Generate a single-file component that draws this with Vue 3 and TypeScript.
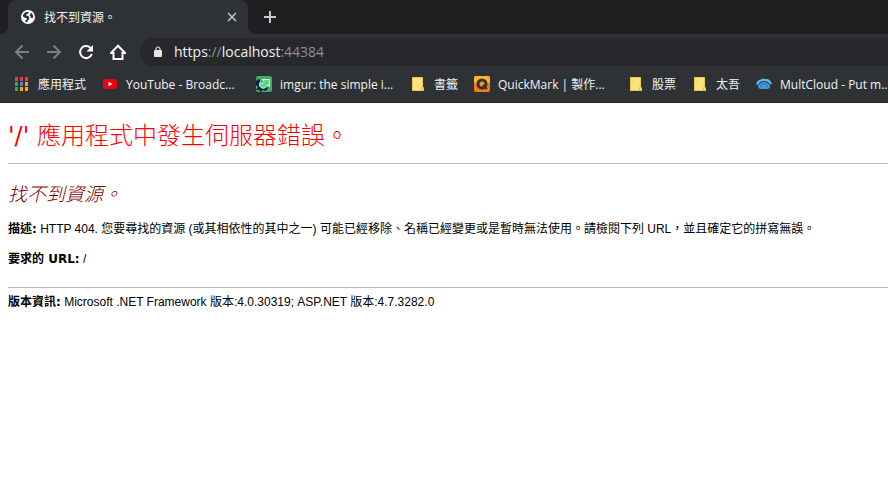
<script setup lang="ts">
type IconName = 'apps' | 'youtube' | 'imgur' | 'folder' | 'quickmark' | 'cloud'

interface Bookmark {
  icon: IconName
  label: string
  wide?: boolean
}

const bookmarks: Bookmark[] = [
  { icon: 'apps', label: '應用程式' },
  { icon: 'youtube', label: 'YouTube - Broadc...', wide: true },
  { icon: 'imgur', label: 'imgur: the simple i...', wide: true },
  { icon: 'folder', label: '書籤' },
  { icon: 'quickmark', label: 'QuickMark | 製作...', wide: true },
  { icon: 'folder', label: '股票' },
  { icon: 'folder', label: '太吾' },
  { icon: 'cloud', label: 'MultCloud - Put m...', wide: true },
]

const appColors: string[] = [
  '#e8403a', '#e8403a', '#e8403a',
  '#34a853', '#4285f4', '#f0a818',
  '#34a853', '#f5b005', '#f5b005',
]
</script>

<template>
  <div class="browser">
    <header class="chrome">
      <div class="tabstrip">
        <div class="tab">
          <svg class="favicon" viewBox="0 0 16 16" aria-hidden="true">
            <circle cx="8" cy="8" r="7" fill="#fff" />
            <path d="M2.800 7.200C3 5 4.500 3.400 6.500 2.900H8.800L8.300 4.500 6.500 5.200 6.200 6.500 8.300 7 9.300 8.400 9 10.500 7.800 11.500 7.200 13.300 5 12.700 5.500 11.200 7 10.200 6.800 9.200 4.500 8.500Z" fill="#2f3235" />
            <path d="M10.500 3.500C12.300 4.400 13.200 6 13.200 8.300L12.300 9.300 10.800 8.800 10.500 7.300 9.300 6.300 10.400 5.300Z" fill="#2f3235" />
          </svg>
          <span class="tab-title">找不到資源。</span>
          <button class="icon-button close" type="button" aria-label="關閉分頁">
            <svg width="10" height="10" viewBox="0 0 10 10"><path d="M1 1l8 8M9 1l-8 8" stroke="#c3c5c8" stroke-width="1.500" /></svg>
          </button>
        </div>
        <button class="icon-button new-tab" type="button" aria-label="新分頁">
          <svg width="12" height="12" viewBox="0 0 12 12"><path d="M6 0v12M0 6h12" stroke="#c8cacd" stroke-width="2" /></svg>
        </button>
      </div>

      <div class="toolbar">
        <button class="icon-button" type="button" aria-label="上一頁">
          <svg width="16" height="16" viewBox="0 0 16 16"><path d="M15 8H2M8.500 1.500L2 8l6.500 6.500" fill="none" stroke="#7d8083" stroke-width="2" /></svg>
        </button>
        <button class="icon-button" type="button" aria-label="下一頁">
          <svg width="16" height="16" viewBox="0 0 16 16"><path d="M1 8h13M7.500 1.500L14 8l-6.500 6.500" fill="none" stroke="#7d8083" stroke-width="2" /></svg>
        </button>
        <button class="icon-button" type="button" aria-label="重新載入">
          <svg width="16" height="16" viewBox="0 0 16 16"><path d="M13.800 10A6 6 0 1 1 12.300 3.800L14 5.500" fill="none" stroke="#fff" stroke-width="2" /><path d="M15 1v6.500H8.500Z" fill="#fff" /></svg>
        </button>
        <button class="icon-button" type="button" aria-label="首頁">
          <svg width="16" height="16" viewBox="0 0 16 16"><path d="M1 9L8 1.700 15 9H12.500V15H3.500V9Z" fill="none" stroke="#fff" stroke-width="2" /></svg>
        </button>
        <div class="address">
          <svg class="lock" width="8" height="12" viewBox="0 0 8 12" aria-hidden="true"><rect y="4" width="8" height="7" rx="1" fill="#e4e6ea" /><path d="M2 5V3a2 2 0 0 1 4 0V5" fill="none" stroke="#e4e6ea" stroke-width="1.200" /></svg>
          <span class="url"><span class="strong">https</span>://<span class="strong">localhost</span>:44384</span>
        </div>
      </div>

      <nav class="bookmarks" aria-label="書籤列">
        <a v-for="item in bookmarks" :key="item.label" class="bookmark" href="#">
          <svg class="bookmark-icon" viewBox="0 0 16 16" aria-hidden="true">
            <template v-if="item.icon === 'apps'">
              <rect v-for="(color, i) in appColors" :key="i" :x="1 + (i % 3) * 5" :y="1 + Math.floor(i / 3) * 5" width="3" height="4" :fill="color" />
            </template>
            <template v-else-if="item.icon === 'youtube'">
              <rect x="1" y="3" width="14" height="10" rx="2" fill="#f00010" />
              <path d="M6.500 5.800L10.300 8 6.500 10.200Z" fill="#fff" />
            </template>
            <template v-else-if="item.icon === 'imgur'">
              <rect width="16" height="16" rx="2" fill="#3fae67" />
              <path d="M0 5L2 3 4 4 4 8 6 11 9 10 12 12 10 15 7 14 5 16 3 14 0 14 2 11 0 9Z" fill="#151d52" />
              <path d="M6 3.500H13.500V10.500L11.500 8.800C10.500 12 7.500 13 5 11.500 3 10 3 7.500 4.500 6 4.500 8 5.500 8.500 8 5.500Z" fill="#5fd48b" stroke="#dff9ea" />
            </template>
            <template v-else-if="item.icon === 'folder'">
              <path d="M2.500 1.500H12.500V11.500H13.500V14.500H2.500Z" fill="#fbe27e" stroke="#edc84c" />
              <path d="M11.500 14V11.500H13" fill="none" stroke="#e6ba35" />
            </template>
            <template v-else-if="item.icon === 'quickmark'">
              <rect width="16" height="16" rx="2" fill="#f17c18" />
              <path d="M2 0H14a2 2 0 0 1 2 2V7H0V2a2 2 0 0 1 2-2Z" fill="#fbb32a" />
              <circle cx="8" cy="8" r="4" fill="#ef9c25" stroke="#3b3029" stroke-width="3" />
              <path d="M9 9l4 4" stroke="#3b3029" stroke-width="2" />
            </template>
            <template v-else>
              <path d="M0 8C1 5 3 3.500 5 3.500 6.500 2 8 2.500 9 3.300 12 2.300 15 4.500 16 8L14 8.500 12 6 8 4.800 4 6 2 9Z" fill="#60bdf4" />
              <path d="M2 10C2 8 3.500 7 4.500 7 6 5 10 5 11.500 7 13 7 14 8.500 14 10 14 12 12.500 13 11 13H5C3.500 13 2 12 2 10Z" fill="#419edb" />
              <path d="M4.500 11C5 9 6 8 8 8S11 9 11.500 11" fill="none" stroke="#2c6f9f" />
              <path d="M2 9C3 7.500 4 7 4.700 7 6 5 10 5 11.300 7 12.500 7 13.500 7.500 14 9" fill="none" stroke="#2f4150" />
            </template>
          </svg>
          <span class="bookmark-label" :class="{ wide: item.wide }">{{ item.label }}</span>
        </a>
      </nav>
    </header>

    <main class="page">
      <h1><span class="path">'/'</span> 應用程式中發生伺服器錯誤。</h1>
      <hr>
      <h2>找不到資源。</h2>
      <p><b>描述:</b> HTTP 404. 您要尋找的資源 (或其相依性的其中之一) 可能已經移除、名稱已經變更或是暫時無法使用。請檢閱下列 URL，並且確定它的拼寫無誤。</p>
      <p><b>要求的 URL:</b> /</p>
      <hr class="footer-rule">
      <p class="version"><b>版本資訊:</b> Microsoft .NET Framework 版本:4.0.30319; ASP.NET 版本:4.7.3282.0</p>
    </main>
  </div>
</template>

<style>
body {
  margin: 0;
  background: #fff;
}
</style>

<style scoped>
.browser {
  overflow: hidden;
  font-family: "Open Sans", "Noto Sans CJK TC", sans-serif;
}

.chrome {
  background: #2f3235;
  border-bottom: 1px solid #202124;
  color: #f1f3f4;
}

.tabstrip {
  display: flex;
  height: 34px;
  padding-left: 8px;
  background: #1f1f21;
}

.tab {
  position: relative;
  display: flex;
  align-items: center;
  box-sizing: border-box;
  width: 240px;
  padding: 0 11px 0 12px;
  border-radius: 8px 8px 0 0;
  background: #2f3235;
}

.tab::before,
.tab::after {
  content: "";
  position: absolute;
  bottom: 0;
  width: 8px;
  height: 8px;
}

.tab::before {
  right: 100%;
  background: radial-gradient(circle at 0 0, #1f1f21 8px, #2f3235 8px);
}

.tab::after {
  left: 100%;
  background: radial-gradient(circle at 100% 0, #1f1f21 8px, #2f3235 8px);
}

.favicon {
  width: 16px;
  height: 16px;
  margin-right: 8px;
}

.tab-title {
  flex: 1;
  padding-top: 2px;
  font-size: 12px;
  line-height: 16px;
}

.icon-button {
  display: flex;
  align-items: center;
  justify-content: center;
  width: 16px;
  height: 16px;
  padding: 0;
  border: 0;
  background: none;
}

.close {
  width: 10px;
}

.new-tab {
  align-self: center;
  margin-left: 14px;
}

.toolbar {
  display: flex;
  align-items: center;
  gap: 16px;
  height: 36px;
  padding-left: 14px;
}

.address {
  display: flex;
  flex: 1;
  align-items: center;
  gap: 12px;
  height: 28px;
  margin-left: -2px;
  padding-left: 14px;
  border-radius: 14px 0 0 14px;
  background: #27282c;
}

.url {
  color: #8e9297;
  font-size: 14px;
  line-height: 20px;
}

.strong {
  color: #f1f3f4;
}

.bookmarks {
  display: flex;
  align-items: center;
  gap: 16px;
  height: 28px;
  padding: 0 0 4px 14px;
}

.bookmark {
  display: flex;
  flex: none;
  align-items: center;
  gap: 8px;
  color: inherit;
  font-size: 12px;
  line-height: 16px;
  text-decoration: none;
  white-space: nowrap;
}

.bookmark-icon {
  width: 16px;
  height: 16px;
}

.bookmark-label {
  padding-top: 2px;
}

.wide {
  width: 114px;
}

.page {
  padding: 17px 0 16px 8px;
  color: #000;
  font-family: "Liberation Sans", "Noto Sans CJK TC", sans-serif;
  font-size: 12px;
  line-height: 18px;
}

h1,
h2 {
  margin: 0;
  font-family: "DejaVu Sans", "Noto Sans CJK TC", sans-serif;
  font-weight: 300;
}

h1 {
  color: #f00;
  font-size: 24px;
  line-height: 32px;
}

.path {
  font-weight: 400;
}

h2 {
  margin-top: 16px;
  color: #800000;
  font-size: 19px;
  font-style: italic;
  line-height: 28px;
}

hr {
  height: 1px;
  margin: 11px 0 0;
  border: 0;
  background: #b8b8b8;
}

p {
  margin: 12px 0 0;
}

b {
  font-family: "DejaVu Sans", "Noto Sans CJK TC", sans-serif;
}

.footer-rule {
  margin-top: 19px;
}

.version {
  margin-top: 5px;
}
</style>
